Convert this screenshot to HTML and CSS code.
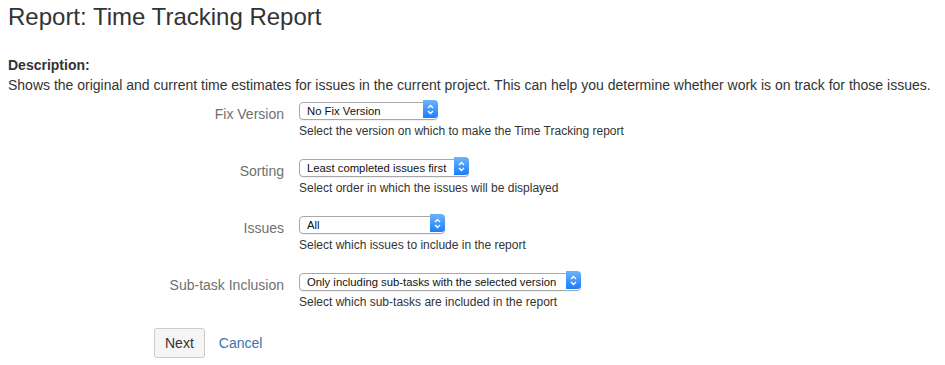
FILE: index.html
```html
<!DOCTYPE html>
<html lang="en">
<head>
<meta charset="UTF-8" />
<meta name="viewport" content="width=device-width, initial-scale=1" />
<title>Report: Time Tracking Report</title>
<link rel="stylesheet" href="styles.css">
</head>
<body>

<h1>Report: Time Tracking Report</h1>

<div class="report-description">
  <strong>Description:</strong>
  <p>Shows the original and current time estimates for issues in the current project. This can help you determine whether work is on track for those issues.</p>
</div>

<form id="reportForm">
  <div class="field-group">
    <label class="field-label" for="versionId">Fix Version</label>
    <div class="field">
      <span class="select-wrap select-version">
        <select id="versionId">
          <option>No Fix Version</option>
        </select>
        <span class="select-arrow">
          <svg width="15" height="17" viewBox="0 0 15 17"><path d="M5 7 L7.5 4.5 L10 7 M5 10 L7.5 12.5 L10 10" fill="none" stroke="#fff" stroke-width="1.4"/></svg>
        </span>
      </span>
      <div class="description">Select the version on which to make the Time Tracking report</div>
    </div>
  </div>

  <div class="field-group">
    <label class="field-label" for="sorting">Sorting</label>
    <div class="field">
      <span class="select-wrap select-sorting">
        <select id="sorting">
          <option>Least completed issues first</option>
          <option>Most completed issues first</option>
        </select>
        <span class="select-arrow">
          <svg width="15" height="17" viewBox="0 0 15 17"><path d="M5 7 L7.5 4.5 L10 7 M5 10 L7.5 12.5 L10 10" fill="none" stroke="#fff" stroke-width="1.4"/></svg>
        </span>
      </span>
      <div class="description">Select order in which the issues will be displayed</div>
    </div>
  </div>

  <div class="field-group">
    <label class="field-label" for="completedFilter">Issues</label>
    <div class="field">
      <span class="select-wrap select-issues">
        <select id="completedFilter">
          <option>All</option>
          <option>Incomplete issues only</option>
        </select>
        <span class="select-arrow">
          <svg width="15" height="17" viewBox="0 0 15 17"><path d="M5 7 L7.5 4.5 L10 7 M5 10 L7.5 12.5 L10 10" fill="none" stroke="#fff" stroke-width="1.4"/></svg>
        </span>
      </span>
      <div class="description">Select which issues to include in the report</div>
    </div>
  </div>

  <div class="field-group">
    <label class="field-label" for="subtaskInclusion">Sub-task Inclusion</label>
    <div class="field">
      <span class="select-wrap select-subtask">
        <select id="subtaskInclusion">
          <option>Only including sub-tasks with the selected version</option>
          <option>Also including sub-tasks without a version set</option>
          <option>Including all sub-tasks</option>
        </select>
        <span class="select-arrow">
          <svg width="15" height="17" viewBox="0 0 15 17"><path d="M5 7 L7.5 4.5 L10 7 M5 10 L7.5 12.5 L10 10" fill="none" stroke="#fff" stroke-width="1.4"/></svg>
        </span>
      </span>
      <div class="description">Select which sub-tasks are included in the report</div>
    </div>
  </div>

  <div class="buttons">
    <button type="submit" class="button">Next</button>
    <a href="#" class="cancel">Cancel</a>
  </div>
</form>

</body>
</html>
```

FILE: styles.css
```css
body {
  margin: 0;
  padding: 2px 8px;
  font-family: "Liberation Sans", Arial, sans-serif;
  font-size: 14px;
  line-height: 20px;
  color: #333;
  background: #fff;
}
h1 {
  margin: 0 0 23px;
  font-size: 24px;
  font-weight: normal;
  line-height: 30px;
}
.report-description strong {
  display: block;
}
.report-description p {
  margin: 0;
}
#reportForm {
  margin-top: 5px;
}
.field-group {
  display: grid;
  grid-template-columns: 276px auto;
  column-gap: 15px;
  margin-bottom: 18px;
}
.field-label {
  text-align: right;
  color: #707070;
  padding-top: 4px;
}
.select-wrap {
  position: relative;
  display: block;
  height: 18px;
}
.select-version { width: 139px; }
.select-sorting { width: 170px; }
.select-issues { width: 146px; }
.select-subtask { width: 282px; }
.select-wrap select {
  appearance: none;
  -webkit-appearance: none;
  box-sizing: border-box;
  width: 100%;
  height: 18px;
  margin: 0;
  padding: 0 20px 0 7px;
  border: 1px solid #a8a8a8;
  border-radius: 4px;
  background: #fff;
  box-shadow: 0 1px 1px rgba(0, 0, 0, 0.06);
  font-family: "Liberation Sans", Arial, sans-serif;
  font-size: 11.3px;
  color: #111;
}
.select-arrow {
  position: absolute;
  top: 0;
  right: 0;
  width: 15px;
  height: 18px;
  border-radius: 0 4px 4px 0;
  background: linear-gradient(#6db3fd, #1b7ef7);
  pointer-events: none;
}
.select-arrow svg {
  display: block;
  margin-top: 0.5px;
}
.description {
  margin-top: 5px;
  font-size: 12px;
  line-height: 16px;
  color: #333;
}
.buttons {
  display: flex;
  align-items: center;
  margin-top: 15px;
  padding-left: 146px;
}
.button {
  box-sizing: border-box;
  height: 30px;
  padding: 4px 10px;
  border: 1px solid #ccc;
  border-radius: 3px;
  background: #f5f5f5;
  color: #333;
  font-family: "Liberation Sans", Arial, sans-serif;
  font-size: 14px;
  line-height: 20px;
  cursor: pointer;
}
.cancel {
  margin-left: 14px;
  color: #3b73af;
  text-decoration: none;
}
```
